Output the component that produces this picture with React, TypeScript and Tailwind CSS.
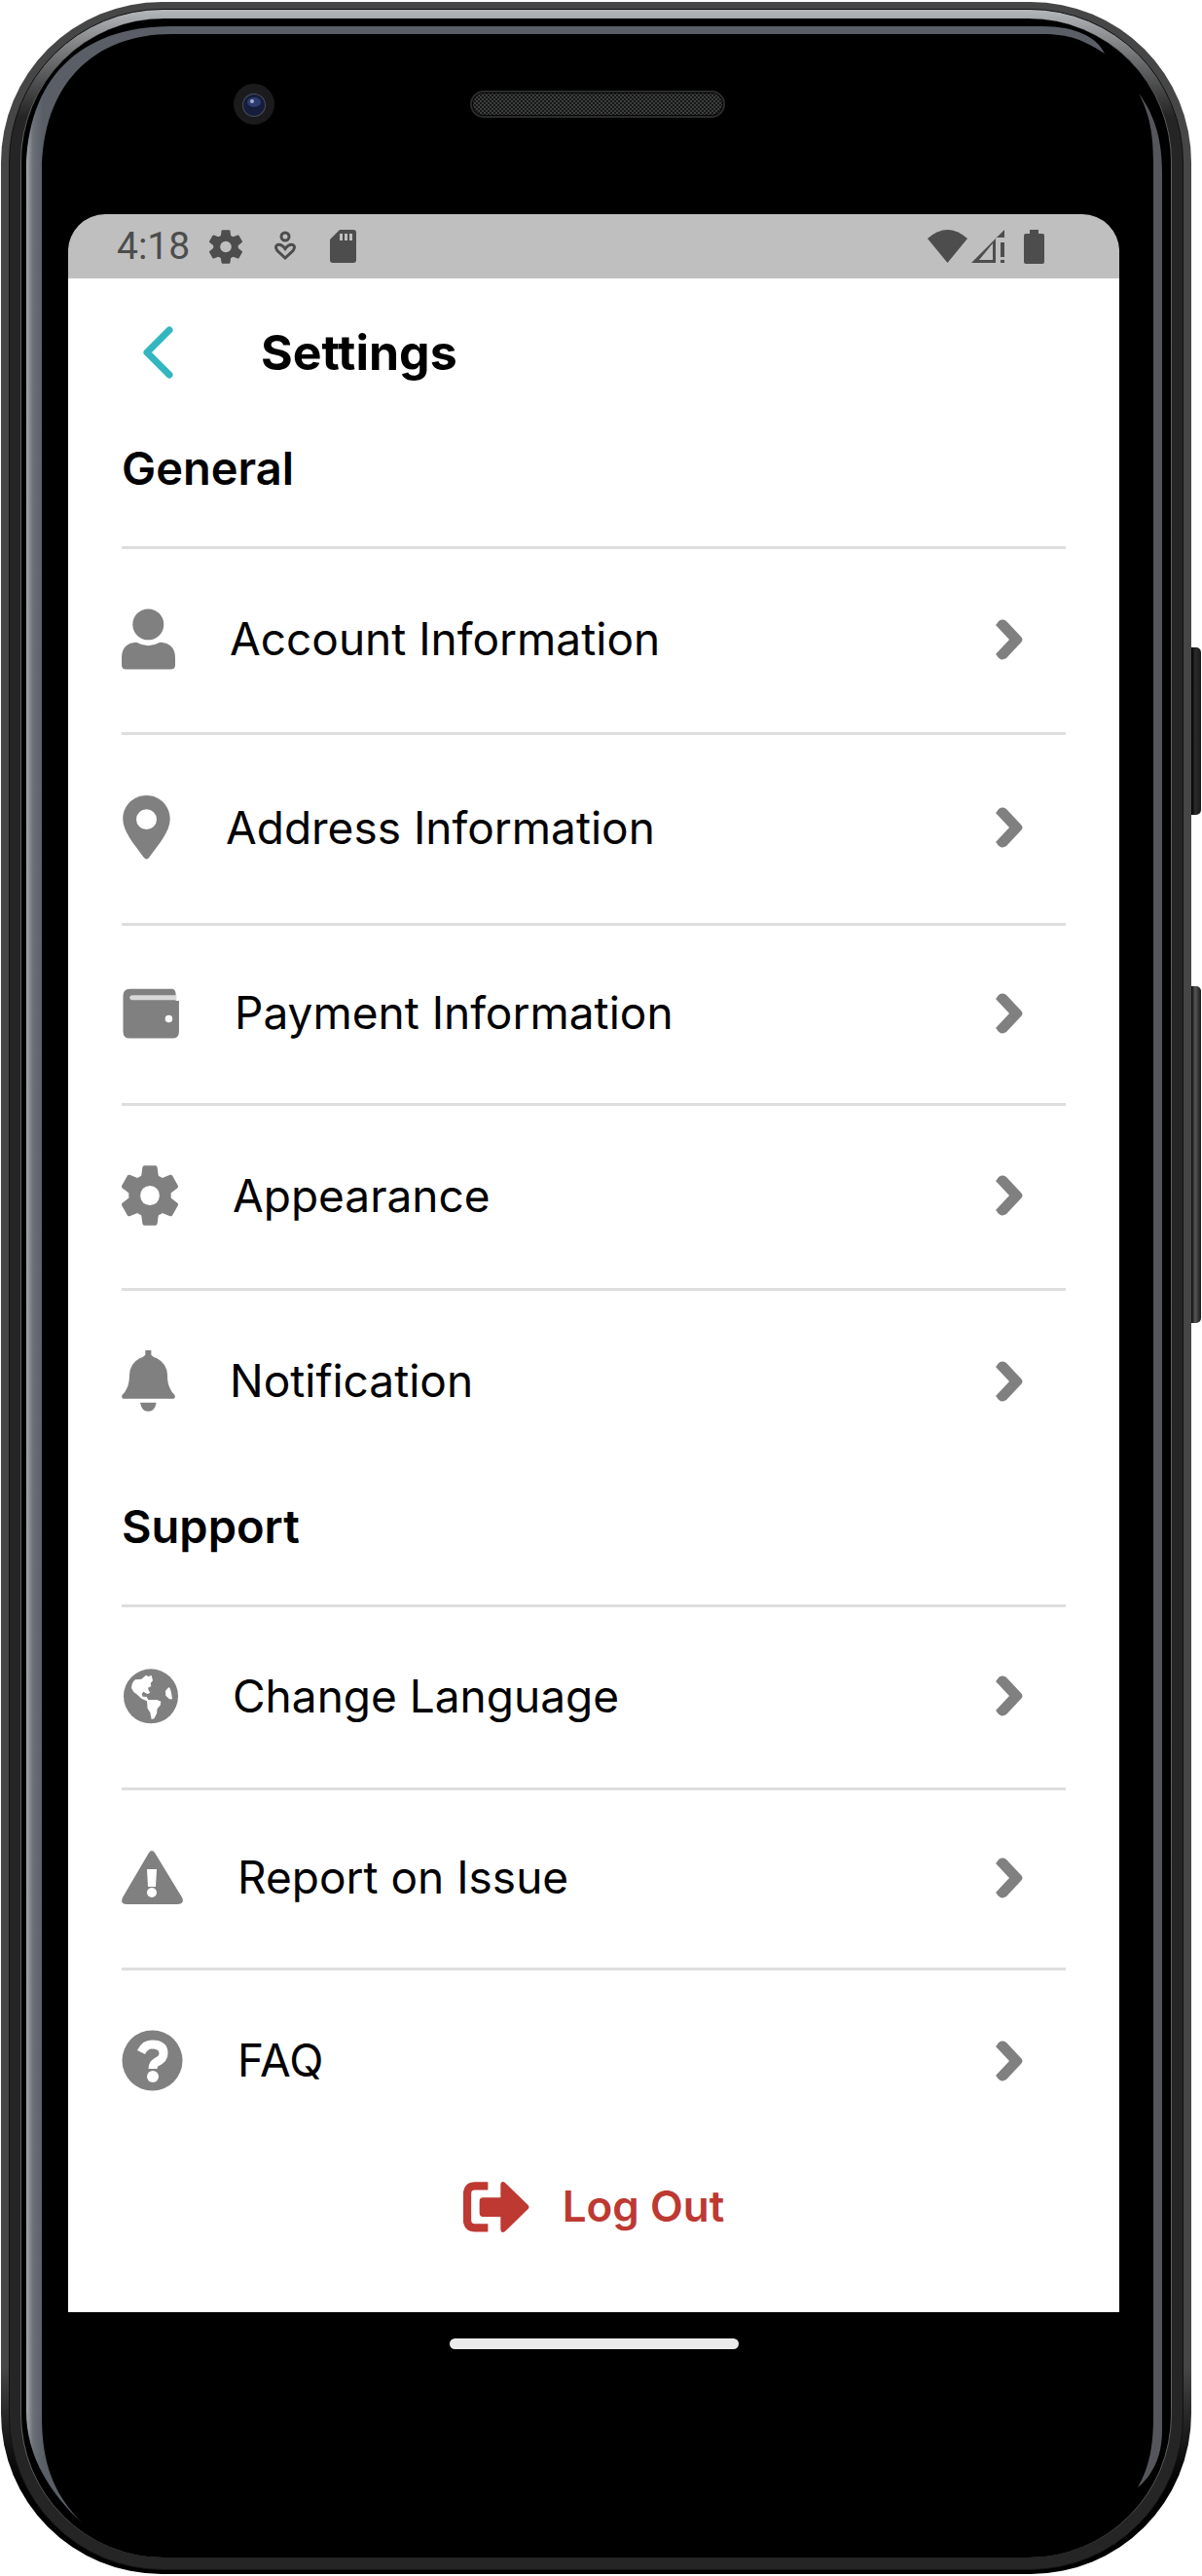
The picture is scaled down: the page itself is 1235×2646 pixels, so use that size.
import type { ReactNode } from "react";

type RowItem = { label: string; icon: ReactNode };

function Gear({ className, hole }: { className: string; hole: string }) {
  return (
    <svg viewBox="-88 -92 176 184" preserveAspectRatio="none" fill="currentColor" className={className} aria-hidden="true">
      <circle r="66" />
      {[0, 60, 120].map((deg) => (
        <path
          key={deg}
          transform={`rotate(${deg})`}
          d="M-17-91H17Q22-91 23-86L27-58V58L23 86Q22 91 17 91H-17Q-22 91-23 86L-27 58V-58L-23-86Q-22-91-17-91Z"
        />
      ))}
      <circle r="30" className={hole} />
    </svg>
  );
}

const PersonIcon = (
  <svg viewBox="154 442 131 150" className="h-[63px] w-[55px]" fill="currentColor" aria-hidden="true">
    <circle cx="219" cy="481" r="38" />
    <path d="M190 525Q204 533 219 533T248 525Q285 527 285 563V580Q285 591 274 591H165Q154 591 154 580V563Q154 527 190 525Z" />
  </svg>
);

const PinIcon = (
  <svg viewBox="155 898 122 160" className="h-[68px] w-[51px]" fill="currentColor" aria-hidden="true">
    <path
      fillRule="evenodd"
      d="M216 899C249 899 274 925 274 957C274 988 246 1019 223 1051Q216 1060 209 1051C186 1019 158 988 158 957C158 925 183 899 216 899ZM216 933a25 25 0 1 0 0 50a25 25 0 1 0 0-50Z"
    />
  </svg>
);

const WalletIcon = (
  <svg viewBox="156 1369 142 124" className="h-[52px] w-[60px]" fill="currentColor" aria-hidden="true">
    <path d="M176 1371H280Q287 1372 288 1383V1400H296V1475Q296 1492 280 1492H175Q159 1492 159 1475V1388Q159 1371 176 1371Z" />
    <path d="M182 1386H290V1398H182Q175 1397 175 1392T182 1386Z" className="fill-[#d8d8d8]" />
    <circle cx="271" cy="1444" r="9" className="fill-white" />
  </svg>
);

const BellIcon = (
  <svg viewBox="15 597 165 189" className="h-[63px] w-[55px]" fill="currentColor" aria-hidden="true">
    <path d="M88 597H106V611Q113 619 124 622Q154 638 156 672Q155 698 165 716Q170 728 178 734Q182 741 176 746H19Q13 741 17 734Q25 728 30 716Q39 700 39 672Q41 638 70 622Q81 619 88 611Z" />
    <path d="M72 758H122Q117 785 97 785T72 758Z" />
  </svg>
);

const GlobeIcon = (
  <svg viewBox="15 24 174 180" className="h-[60px] w-[58px]" fill="currentColor" aria-hidden="true">
    <circle cx="105" cy="115" r="84" />
    <path
      className="fill-white"
      d="M45 90Q46 72 57 64L76 62L90 50L97 54L107 51L111 67L104 75L106 84L96 89L98 97L103 104L94 108L82 101L77 108L80 116L92 117L97 126H124L136 131L134 143L125 153L123 169L115 184L107 186L103 165L95 153L93 130L76 122L63 110Q50 103 45 90Z"
    />
    <path className="fill-white" d="M150 98L160 87L165 92L169 110L171 124L162 124L151 113Z" />
  </svg>
);

const WarningIcon = (
  <svg viewBox="0 0 63 55" className="h-[55px] w-[63px]" fill="currentColor" aria-hidden="true">
    <path d="M28 2Q31-2 34 2L62 48Q65 55 57 55H5Q-2 55 1 48Z" />
    <path d="M26 19H36L35 37H27Z" className="fill-white" />
    <circle cx="31" cy="43" r="5" className="fill-white" />
  </svg>
);

const QuestionIcon = (
  <svg viewBox="0 0 63 63" className="size-[63px]" fill="currentColor" aria-hidden="true">
    <circle cx="31.500" cy="31.500" r="31" />
    <path d="M20 23Q24 15 31 15Q43 15 43 24Q43 30 36 33Q32 35 32 40" className="fill-none stroke-white stroke-[9]" />
    <circle cx="32" cy="48" r="6" className="fill-white" />
  </svg>
);

const general: RowItem[] = [
  { label: "Account Information", icon: PersonIcon },
  { label: "Address Information", icon: PinIcon },
  { label: "Payment Information", icon: WalletIcon },
  { label: "Appearance", icon: <Gear className="h-[62px] w-[58px]" hole="fill-white" /> },
  { label: "Notification", icon: BellIcon },
];

const support: RowItem[] = [
  { label: "Change Language", icon: GlobeIcon },
  { label: "Report on Issue", icon: WarningIcon },
  { label: "FAQ", icon: QuestionIcon },
];

function Section({ title, items }: { title: string; items: RowItem[] }) {
  return (
    <section>
      <h2 className="mb-[52px] text-[47px] leading-[57px] font-semibold">{title}</h2>
      <ul>
        {items.map((item) => (
          <li key={item.label} className="border-t-3 border-[#dedede]">
            <button type="button" className="flex w-full items-center gap-14 pt-[61px] pb-16 pr-11 text-left">
              <span className="shrink-0 text-[#808080]">{item.icon}</span>
              <span className="flex-1 text-[46px] leading-[57px]">{item.label}</span>
              <svg viewBox="0 0 28 44" className="h-11 w-7 shrink-0 text-[#808080]" fill="currentColor" aria-hidden="true">
                <path d="M1 6Q5-1 11 3L26 19Q29 22 26 25L11 41Q5 45 1 38L0 37L14 22L0 7Z" />
              </svg>
            </button>
          </li>
        ))}
      </ul>
    </section>
  );
}

function StatusBar() {
  return (
    <div className="flex h-[66px] items-center justify-between rounded-t-[38px] bg-[#bfbfbf] pr-[77px] pl-[50px] text-[#4d4d4d]">
      <div className="flex items-center">
        <span className="font-[Roboto,sans-serif] text-[39px] leading-none">4:18</span>
        <Gear className="ml-5 h-[35px] w-[34px]" hole="fill-[#bfbfbf]" />
        <svg viewBox="0 0 24 32" className="ml-8 h-8 w-6" fill="none" stroke="currentColor" strokeWidth="3" aria-hidden="true">
          <circle cx="12" cy="6" r="4" />
          <path d="M12 28L4 20.500Q1 16 4 14.500Q8 13 12 18.500Q16 13 20 14.500Q23 16 20 20.500Z" />
        </svg>
        <svg viewBox="0 0 27 34" className="ml-[34px] h-[34px] w-[27px]" fill="currentColor" aria-hidden="true">
          <path d="M10 0H24Q27 0 27 3V31Q27 34 24 34H3Q0 34 0 31V10Z" />
          <path d="M10 4h3v7h-3zM15 4h3v7h-3zM20 4h3v7h-3z" className="fill-[#bfbfbf]" />
        </svg>
      </div>
      <div className="flex items-center">
        <svg viewBox="0 0 41 34" className="h-[34px] w-[41px]" fill="currentColor" aria-hidden="true">
          <path d="M0 9Q20.500-9 41 9L20.500 34Z" />
        </svg>
        <svg viewBox="0 0 35 34" className="ml-1 h-[34px] w-[35px]" fill="currentColor" aria-hidden="true">
          <path fillRule="evenodd" d="M0 34L34 0V8H25V34ZM8 31H22V14Z" />
          <path d="M30 13h4v15h-4zM30 31h4v3h-4z" />
        </svg>
        <svg viewBox="0 0 21 35" className="ml-[19px] h-[35px] w-[21px]" fill="currentColor" aria-hidden="true">
          <path d="M6 0H15V4H19Q21 4 21 6V33Q21 35 19 35H2Q0 35 0 33V6Q0 4 2 4H6Z" />
        </svg>
      </div>
    </div>
  );
}

function Glass() {
  return (
    <svg viewBox="0 0 1223 2642" preserveAspectRatio="none" className="pointer-events-none absolute inset-0 size-full" aria-hidden="true">
      <defs>
        <linearGradient id="edge" gradientUnits="userSpaceOnUse" x1="26" y1="0" x2="43" y2="0">
          <stop offset="0" stopColor="#a6a8aa" />
          <stop offset="0.4" stopColor="#6c7178" />
          <stop offset="1" stopColor="#5a5e66" />
        </linearGradient>
        <pattern id="mesh" width="4" height="4" patternUnits="userSpaceOnUse">
          <rect width="4" height="4" fill="#161717" />
          <path d="M0 0h2v2h-2zM2 2h2v2h-2z" fill="#3c3e3d" />
        </pattern>
      </defs>
      <path
        fill="url(#edge)"
        d="M85 2591C45 2555 26 2515 26 2475V175C26 80 80 25 175 25H1070C1104 25 1126 36 1134 53C1112 39 1098 33 1070 33H175C95 33 42 85 42 175V2480C42 2530 55 2562 85 2591Z"
      />
      <path fill="#55565b" d="M1169 94C1187 118 1193 145 1193 175V2495C1193 2520 1184 2540 1168 2553C1180 2532 1184 2510 1184 2480V165C1184 135 1180 115 1169 94Z" />
    </svg>
  );
}

export default function App() {
  return (
    <div className="min-h-screen bg-white pt-0.5 pr-[11px] pb-0.5 pl-px font-[Inter,sans-serif] text-black">
      <div className="relative">
        <span className="absolute top-[663px] -right-2.5 h-[172px] w-3 rounded-r-[5px] bg-linear-to-r from-black via-[#2b2b2b] to-[#1a1a1a]" />
        <span className="absolute top-[1011px] -right-2.5 h-[346px] w-3 rounded-r-[5px] bg-linear-to-r from-black via-[#585858] to-[#1a1a1a]" />
        {/* Outer shell, metal rail, then glass */}
        <div className="relative rounded-[165px] bg-linear-to-b from-[#474646] from-92% to-black to-98% px-2 pt-[7px] pb-1">
          <div className="rounded-[158px] border border-[#111] bg-linear-to-b from-[#b4b7ba] to-[#252525] to-[110px] px-[11px] pt-[9px] pb-3">
            <div className="rounded-[147px] border-x border-[#5f5f5f] bg-black pr-[53px] pl-12">
              <header className="flex h-[201px] items-center pb-[26px]" aria-hidden="true">
                <svg viewBox="0 0 42 42" className="ml-[170px] size-[42px] shrink-0">
                  <circle cx="21" cy="21" r="21" fill="#1b1b1d" />
                  <circle cx="21" cy="22" r="12" fill="#4c4d55" />
                  <circle cx="21" cy="22" r="11" fill="#141d3c" />
                  <ellipse cx="21" cy="19" rx="7" ry="5" fill="#2c3c70" />
                  <circle cx="19" cy="18" r="2" fill="#a4aecb" />
                </svg>
                <svg viewBox="0 0 262 28" className="ml-[201px] h-7 w-[262px] shrink-0">
                  <rect x="1" y="1" width="260" height="26" rx="13" fill="#050505" stroke="#2b2b2b" strokeWidth="2" />
                  <rect x="3" y="3" width="256" height="22" rx="11" fill="url(#mesh)" />
                </svg>
              </header>
              <StatusBar />
              <main className="bg-white px-[55px] pb-20">
                <div className="flex h-[152px] items-center gap-[90px] pl-[21px]">
                  <button type="button" aria-label="Back" className="text-[#33b6c0]">
                    <svg viewBox="0 0 32 54" className="h-[54px] w-8" fill="none" stroke="currentColor" strokeWidth="7" strokeLinecap="round" strokeLinejoin="round" aria-hidden="true">
                      <path d="M28 4L5 27L28 50" />
                    </svg>
                  </button>
                  <h1 className="text-[50px] leading-[57px] font-bold">Settings</h1>
                </div>
                <div className="flex flex-col gap-[25px] pt-3.5">
                  <Section title="General" items={general} />
                  <Section title="Support" items={support} />
                </div>
                <div className="flex justify-center pt-[26px]">
                  <button type="button" className="flex items-center gap-[34px] text-[#bd3932]">
                    <svg viewBox="225 180 204 156" className="h-[52px] w-[68px]" aria-hidden="true">
                      <path d="M301 193H262Q237 193 237 218V297Q237 322 262 322H301" fill="none" stroke="currentColor" strokeWidth="25" />
                      <path d="M275 240Q275 229 286 229H340V188Q341 176 353 182L424 251Q431 258 424 265L353 334Q341 340 340 328V288H286Q275 288 275 277Z" fill="currentColor" />
                    </svg>
                    <span className="text-[44px] leading-[57px] font-semibold">Log Out</span>
                  </button>
                </div>
              </main>
              <div className="flex h-[252px] justify-center pt-[27px]">
                <div className="h-[11px] w-[297px] rounded-full bg-[#ebebeb]" />
              </div>
            </div>
          </div>
          <Glass />
        </div>
      </div>
    </div>
  );
}
